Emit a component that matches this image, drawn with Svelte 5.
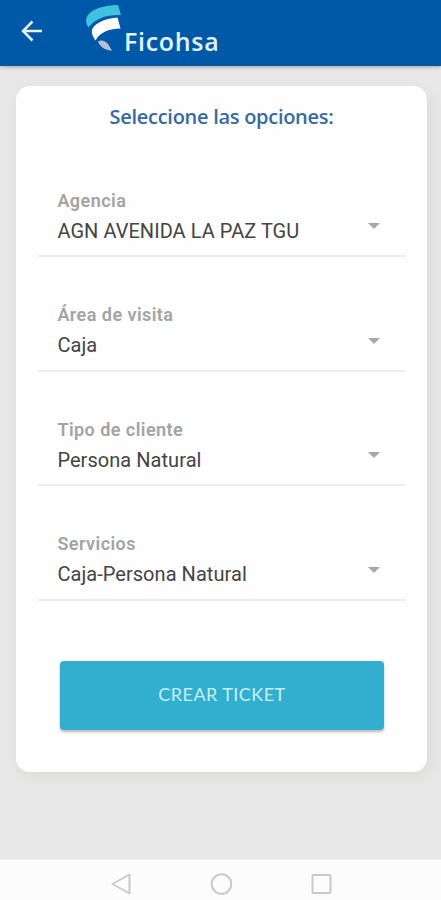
<script lang="ts">
  interface Field {
    id: string;
    label: string;
    value: string;
  }

  const fields: Field[] = [
    { id: 'agencia', label: 'Agencia', value: 'AGN AVENIDA LA PAZ TGU' },
    { id: 'area', label: 'Área de visita', value: 'Caja' },
    { id: 'cliente', label: 'Tipo de cliente', value: 'Persona Natural' },
    { id: 'servicio', label: 'Servicios', value: 'Caja-Persona Natural' }
  ];
</script>

<div class="screen">
  <header class="toolbar">
    <button class="back" aria-label="Regresar">
      <svg width="22" height="22" viewBox="0 0 22 22" fill="none" stroke="currentColor" stroke-width="2.5">
        <path d="M21 11H2.500M11.500 1.500L2 11l9.500 9.500"/>
      </svg>
    </button>
    <div class="brand">
      <svg width="37" height="48" viewBox="0 0 37 48">
        <path d="M2.500 23.500C-1.500 18-.5 12 5 8 12 3 22 1 32 1l3 10C22 10.500 9 14 2.500 23.500Z" fill="#3fc1df"/>
        <path d="M9.500 36.500C5.500 31 4.500 26 8 22.500 13 17 22 14.500 31.500 13.500l3 11C24 24.500 14 28 9.500 36.500Z" fill="#fff"/>
        <path d="M12 37.500c3-2 7-1 10 2.500l4 6.500C20 47 14 43 12 37.500Z" fill="#b9bfd0"/>
      </svg>
      <span>Ficohsa</span>
    </div>
  </header>

  <main>
    <section class="card">
      <h1>Seleccione las opciones:</h1>

      <div class="fields">
        {#each fields as field (field.id)}
          <div class="field">
            <div class="text">
              <span class="label">{field.label}</span>
              <span class="value">{field.value}</span>
            </div>
            <svg class="caret" width="12" height="6" viewBox="0 0 12 6">
              <path d="M0 0h12L6 6z" fill="currentColor"/>
            </svg>
          </div>
        {/each}
      </div>

      <button class="submit">CREAR TICKET</button>
    </section>
  </main>

  <nav class="system-nav">
    <svg width="22" height="22" viewBox="0 0 22 22" fill="none" stroke="currentColor" stroke-width="2" stroke-linejoin="round">
      <path d="M19.500 1.500v19L2.500 11z"/>
    </svg>
    <svg width="22" height="22" viewBox="0 0 22 22" fill="none" stroke="currentColor" stroke-width="2">
      <circle cx="11.500" cy="11" r="9.800"/>
    </svg>
    <svg width="22" height="22" viewBox="0 0 22 22" fill="none" stroke="currentColor" stroke-width="2">
      <rect x="2.500" y="2" width="18" height="18" rx="1"/>
    </svg>
  </nav>
</div>

<style>
  :global(body) {
    margin: 0;
  }

  .screen {
    display: flex;
    flex-direction: column;
    height: 900px;
    overflow: hidden;
    background: #e8e8e8;
    font-family: Roboto, sans-serif;
  }

  .toolbar {
    display: flex;
    align-items: flex-start;
    box-sizing: border-box;
    height: 66px;
    flex: none;
    padding-left: 21px;
    background: #0058a9;
    box-shadow: 0 1px 4px rgba(0, 0, 0, 0.3);
    color: #e4f2fc;
  }

  button {
    border: none;
    cursor: pointer;
  }

  .back {
    display: flex;
    margin-top: 20px;
    padding: 0;
    background: none;
    color: inherit;
  }

  .brand {
    display: flex;
    margin: 4px 0 0 43px;
  }

  .brand span {
    margin: 23px 0 0 1px;
    font-family: 'Open Sans', sans-serif;
    font-size: 25px;
    font-weight: 600;
    line-height: 28px;
    letter-spacing: 0.7px;
  }

  main {
    flex: 1;
    padding: 20px 14px 0 16px;
  }

  .card {
    display: flex;
    flex-direction: column;
    box-sizing: border-box;
    height: 686px;
    padding: 17px 22px 0;
    border-radius: 14px;
    background: #fefefe;
    box-shadow: 3px 5px 14px rgba(60, 60, 40, 0.08);
  }

  h1 {
    margin: 0;
    font-family: 'Open Sans', sans-serif;
    font-size: 20px;
    font-weight: 600;
    line-height: 28px;
    letter-spacing: -0.28px;
    text-align: center;
    color: #356b9f;
  }

  .fields {
    display: flex;
    flex-direction: column;
    gap: 36.6px;
    margin-top: 48px;
  }

  .field {
    display: flex;
    justify-content: space-between;
    box-sizing: border-box;
    height: 78px;
    padding: 10.6px 25px 0 19.4px;
    border-bottom: 2px solid #ededed;
  }

  .text {
    display: flex;
    flex-direction: column;
  }

  .label {
    font-size: 18px;
    font-weight: 600;
    line-height: 22px;
    letter-spacing: 0.45px;
    color: #a3a3a3;
  }

  .value {
    margin-top: 7px;
    font-size: 20px;
    line-height: 24px;
    letter-spacing: 0.05px;
    color: #444;
  }

  .caret {
    margin-top: 33.4px;
    color: #a8a8a8;
  }

  .submit {
    height: 69px;
    margin: 60px 21px 0 22px;
    padding-bottom: 3px;
    border-radius: 4px;
    background: #32afce;
    box-shadow: 0 2px 3px rgba(0, 0, 0, 0.28);
    color: #c8eef8;
    font-family: Lato, sans-serif;
    font-size: 18px;
    letter-spacing: 0.45px;
  }

  .system-nav {
    display: flex;
    align-items: center;
    justify-content: center;
    gap: 78px;
    box-sizing: border-box;
    height: 41px;
    flex: none;
    padding-top: 8px;
    border-top: 1px solid #f1f1f1;
    background: #fcfcfc;
    color: #cacaca;
  }
</style>
